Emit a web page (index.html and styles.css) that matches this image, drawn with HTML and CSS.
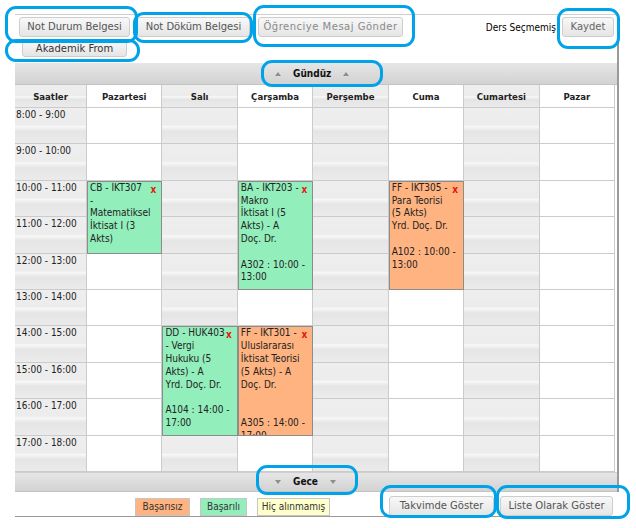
FILE: index.html
```html
<!DOCTYPE html>
<html lang="tr">
<head>
<meta charset="utf-8">
<title>Ders Programı</title>
<link rel="stylesheet" href="styles.css">
</head>
<body>
<div class="panel">
  <div class="toolbar">
    <div class="row1">
      <button class="btn b1">Not Durum Belgesi</button>
      <button class="btn b2">Not Döküm Belgesi</button>
      <button class="btn b3 disabled">Öğrenciye Mesaj Gönder</button>
      <span class="label">Ders Seçmemiş</span>
      <button class="btn b4">Kaydet</button>
    </div>
    <div class="row2">
      <button class="btn b5">Akademik From</button>
    </div>
  </div>

  <div class="bar bar-day"><span class="tri up"></span><span>Gündüz</span><span class="tri up"></span></div>

  <div class="grid">
    <div class="c g h">Saatler</div>
    <div class="c w h">Pazartesi</div>
    <div class="c g h">Salı</div>
    <div class="c w h">Çarşamba</div>
    <div class="c g h">Perşembe</div>
    <div class="c w h">Cuma</div>
    <div class="c g h">Cumartesi</div>
    <div class="c w h">Pazar</div>

    <div class="ev green e1"><span class="x">x</span>CB - İKT307<br>-<br>Matematiksel<br>İktisat I (3<br>Akts)</div>
    <div class="ev green e2"><span class="x">x</span>BA - İKT203 -<br>Makro<br>İktisat I (5<br>Akts) - A<br>Doç. Dr.<br>&nbsp;<br>A302 : 10:00 -<br>13:00</div>
    <div class="ev orange e3"><span class="x">x</span>FF - İKT305 -<br>Para Teorisi<br>(5 Akts)<br>Yrd. Doç. Dr.<br>&nbsp;<br>A102 : 10:00 -<br>13:00</div>
    <div class="ev green e4"><span class="x">x</span>DD - HUK403<br>- Vergi<br>Hukuku (5<br>Akts) - A<br>Yrd. Doç. Dr.<br>&nbsp;<br>A104 : 14:00 -<br>17:00</div>
    <div class="ev orange e5"><span class="x">x</span>FF - İKT301 -<br>Uluslararası<br>İktisat Teorisi<br>(5 Akts) - A<br>Doç. Dr.<br>&nbsp;<br>&nbsp;<br>A305 : 14:00 -<br>17:00</div>

    <!-- 8:00 -->
    <div class="c g t">8:00 - 9:00</div>
    <div class="c w"></div><div class="c g"></div><div class="c w"></div><div class="c g"></div><div class="c w"></div><div class="c g"></div><div class="c w"></div>
    <!-- 9:00 -->
    <div class="c g t">9:00 - 10:00</div>
    <div class="c w"></div><div class="c g"></div><div class="c w"></div><div class="c g"></div><div class="c w"></div><div class="c g"></div><div class="c w"></div>
    <!-- 10:00 -->
    <div class="c g t">10:00 - 11:00</div>
    <div class="c g"></div><div class="c g"></div><div class="c g"></div><div class="c w"></div>
    <!-- 11:00 -->
    <div class="c g t">11:00 - 12:00</div>
    <div class="c g"></div><div class="c g"></div><div class="c g"></div><div class="c w"></div>
    <!-- 12:00 -->
    <div class="c g t">12:00 - 13:00</div>
    <div class="c w"></div><div class="c g"></div><div class="c g"></div><div class="c g"></div><div class="c w"></div>
    <!-- 13:00 -->
    <div class="c g t">13:00 - 14:00</div>
    <div class="c w"></div><div class="c g"></div><div class="c w"></div><div class="c g"></div><div class="c w"></div><div class="c g"></div><div class="c w"></div>
    <!-- 14:00 -->
    <div class="c g t">14:00 - 15:00</div>
    <div class="c w"></div><div class="c g"></div><div class="c w"></div><div class="c g"></div><div class="c w"></div>
    <!-- 15:00 -->
    <div class="c g t">15:00 - 16:00</div>
    <div class="c w"></div><div class="c g"></div><div class="c w"></div><div class="c g"></div><div class="c w"></div>
    <!-- 16:00 -->
    <div class="c g t">16:00 - 17:00</div>
    <div class="c w"></div><div class="c g"></div><div class="c w"></div><div class="c g"></div><div class="c w"></div>
    <!-- 17:00 -->
    <div class="c g t">17:00 - 18:00</div>
    <div class="c w"></div><div class="c g"></div><div class="c w"></div><div class="c g"></div><div class="c w"></div><div class="c g"></div><div class="c w"></div>
  </div>

  <div class="bar bar-night"><span class="tri down"></span><span>Gece</span><span class="tri down"></span></div>
</div>

<div class="footer">
  <span class="legend fail">Başarısız</span>
  <span class="legend ok">Başarılı</span>
  <span class="legend none">Hiç alınmamış</span>
  <button class="btn f1">Takvimde Göster</button>
  <button class="btn f2">Liste Olarak Göster</button>
</div>

<div class="mark m1"></div>
<div class="mark m2"></div>
<div class="mark m3"></div>
<div class="mark m4"></div>
<div class="mark m5"></div>
<div class="mark m6"></div>
<div class="mark m7"></div>
<div class="mark m8"></div>
<div class="mark m9"></div>
</body>
</html>
```

FILE: styles.css
```css
* { box-sizing: border-box; }
html, body { margin: 0; padding: 0; background: #fff; }
body {
  width: 636px;
  height: 528px;
  position: relative;
  overflow: hidden;
  font-family: "DejaVu Sans Condensed", "DejaVu Sans", sans-serif;
  font-size: 10px;
  color: #222;
}

.panel {
  margin: 14px 0 0 15px;
  width: 604px;
  border-top: 1px solid #cfcfcf;
  border-right: 2px solid #9a9a9a;
}

/* toolbar */
.toolbar {
  height: 48px;
  padding: 2px 3px 0 4px;
  display: flex;
  flex-direction: column;
  gap: 3px;
}
.row1 { display: flex; align-items: center; height: 20px; }
.row2 { display: flex; }

.btn {
  height: 20px;
  padding: 0;
  margin: 0;
  border: 1px solid #cdcdcd;
  border-radius: 3px;
  background: linear-gradient(#f8f8f8, #e5e5e5);
  font-family: "DejaVu Sans", sans-serif;
  font-size: 10px;
  color: #555;
  line-height: 18px;
  text-align: center;
  white-space: nowrap;
}
.b1 { width: 111px; }
.b2 { width: 113px; margin-left: 7px; }
.b3 { width: 145px; margin-left: 8px; letter-spacing: 0.5px; }
.disabled { color: #8a8a8a; }
.b4 { width: 52px; margin-left: 6px; color: #666; }
.b5 { width: 105px; height: 17px; line-height: 15px; margin-left: 3px; color: #333; }

.label {
  margin-left: auto;
  color: #000;
  font-size: 10px;
  white-space: nowrap;
}

/* bars */
.bar {
  display: flex;
  align-items: center;
  gap: 12px;
  padding-left: 260px;
  background: linear-gradient(#e6e6e6, #d2d2d2);
  border-bottom: 1px solid #c4c4c4;
  font-weight: bold;
  font-size: 10px;
  color: #111;
}
.bar-day { height: 22px; }
.bar-night { height: 20px; border-top: 1px solid #cfcfcf; }
.tri { width: 0; height: 0; border-left: 3px solid transparent; border-right: 3px solid transparent; }
.tri.up { border-bottom: 4px solid #8e8e8e; }
.tri.down { border-top: 4px solid #8e8e8e; }

/* schedule grid */
.grid {
  display: grid;
  width: 600px;
  grid-template-columns: 72px repeat(7, 1fr);
  grid-template-rows: 23px repeat(10, 36.4px);
}
.c {
  border-right: 1px solid #cbcbcb;
  border-bottom: 1px solid #cbcbcb;
}
.g {
  background: linear-gradient(#eeeeee 0%, #ececec 48%, #f7f7f7 53%, #e5e5e5 66%, #ebebeb 100%);
}
.w { background: #fff; }
.h {
  display: flex;
  align-items: center;
  justify-content: center;
  font-weight: bold;
  font-size: 9.5px;
  color: #222;
}
.t {
  padding: 1px 0 0 1px;
  line-height: 12.8px;
  color: #222;
  white-space: nowrap;
}

.ev {
  border: 1px solid #8c8c8c;
  padding: 0 2px;
  overflow: hidden;
  line-height: 12.8px;
  font-size: 10px;
  color: #222;
  white-space: nowrap;
}
.green { background: #92eebb; }
.orange { background: #ffb380; }
.x {
  float: right;
  color: #e8150f;
  font-weight: bold;
  font-size: 10px;
  line-height: 12px;
  margin: 2px 3px 0 0;
}
.e1 { grid-column: 2; grid-row: 4 / span 2; }
.e2 { grid-column: 4; grid-row: 4 / span 3; }
.e3 { grid-column: 6; grid-row: 4 / span 3; }
.e4 { grid-column: 3; grid-row: 8 / span 3; }
.e5 { grid-column: 4; grid-row: 8 / span 3; }

/* footer */
.footer {
  margin-left: 15px;
  width: 603px;
  height: 25px;
  display: flex;
  align-items: flex-end;
  padding: 0 5px 0 120px;
  border-bottom: 1px solid #999;
}
.legend {
  height: 18px;
  border: 1px solid #c6c6c6;
  line-height: 16px;
  text-align: center;
  color: #333;
  margin-right: 10px;
  white-space: nowrap;
}
.fail { width: 55px; background: #ffb380; }
.ok { width: 47px; background: #92eebb; }
.none { width: 73px; background: #ffffcc; }
.f1 { width: 105px; margin-left: auto; }
.f2 { width: 113px; margin-left: 6px; }

/* blue annotation outlines drawn over the screenshot */
.mark {
  position: absolute;
  border: 3px solid #00a2e8;
  border-radius: 11px;
  pointer-events: none;
}
.m1 { left: 5px; top: 6px; width: 133px; height: 37px; }
.m2 { left: 133px; top: 12px; width: 120px; height: 31px; }
.m3 { left: 253px; top: 5px; width: 162px; height: 42px; }
.m4 { left: 557px; top: 8px; width: 63px; height: 41px; }
.m5 { left: 5px; top: 39px; width: 135px; height: 23px; }
.m6 { left: 261px; top: 60px; width: 122px; height: 27px; }
.m7 { left: 256px; top: 465px; width: 102px; height: 30px; }
.m8 { left: 380px; top: 485px; width: 117px; height: 33px; }
.m9 { left: 496px; top: 485px; width: 134px; height: 34px; }
```
